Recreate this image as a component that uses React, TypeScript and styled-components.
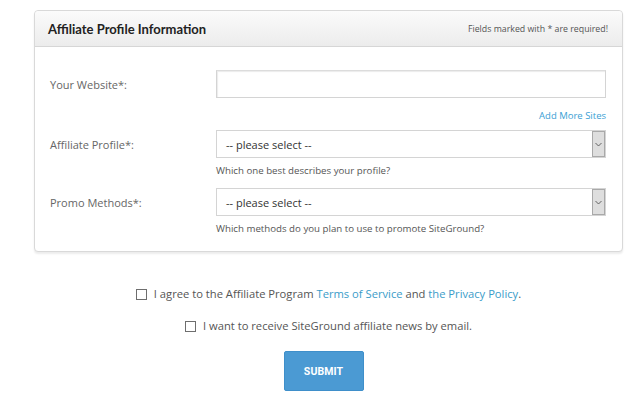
import React from "react";
import styled, { createGlobalStyle } from "styled-components";

const Global = createGlobalStyle`
  html, body { margin: 0; padding: 0; background: #fff; }
  body { font-family: "Open Sans", "Liberation Sans", sans-serif; }
  * { box-sizing: border-box; }
`;

const Page = styled.div`
  width: 589px;
  margin-left: 34px;
  padding-top: 10px;
`;

const Card = styled.section`
  border: 1px solid #d9d9d9;
  border-radius: 4px;
  background: #fff;
  box-shadow: 0 2px 2px rgba(0, 0, 0, 0.08);
`;

const Header = styled.header`
  height: 36px;
  display: flex;
  align-items: center;
  justify-content: space-between;
  padding: 0 14px 0 13px;
  background: linear-gradient(#fbfbfb, #ececec);
  border-bottom: 1px solid #d6d6d6;
  border-radius: 4px 4px 0 0;
`;

const Title = styled.h2`
  margin: 0;
  font-family: Lato, "Liberation Sans", sans-serif;
  font-weight: 700;
  font-size: 13px;
  color: #222;
`;

const Note = styled.span`
  font-size: 8.8px;
  color: #555;
`;

const Body = styled.div`
  display: grid;
  grid-template-columns: 166px 1fr;
  padding: 23px 16px 15px 15px;
`;

const Label = styled.label`
  font-size: 11px;
  color: #666;
  display: flex;
  align-items: center;
  height: 28px;
`;

const Field = styled.div<{ $gap?: number }>`
  display: flex;
  flex-direction: column;
  margin-bottom: ${(p) => p.$gap ?? 0}px;
`;

const TextInput = styled.input`
  height: 28px;
  width: 100%;
  border: 1px solid #d4d4d4;
  border-top-color: #dcdcdc;
  box-shadow: inset 1px 1px 1px #ececec;
  outline: none;
`;

const SelectBox = styled.div`
  height: 28px;
  display: flex;
  align-items: stretch;
  border: 1px solid #d4d4d4;
  background: #fff;
`;

const SelectText = styled.span`
  flex: 1;
  display: flex;
  align-items: center;
  padding-left: 9px;
  font-size: 11px;
  color: #333;
`;

const ArrowBtn = styled.span`
  width: 13px;
  display: flex;
  align-items: center;
  justify-content: center;
  background: #dedede;
  border: 1px solid #a9a9a9;
`;

const Help = styled.span`
  margin-top: 6px;
  font-size: 9.7px;
  line-height: 14px;
  color: #555;
`;

const AddMore = styled.a`
  grid-column: 2;
  justify-self: end;
  margin: 11px 0 7px;
  font-size: 9.5px;
  line-height: 14px;
  color: #3aa0d4;
  text-decoration: none;
`;

const Footer = styled.div`
  display: flex;
  flex-direction: column;
  align-items: center;
  padding-top: 35px;
`;

const CheckRow = styled.label<{ $mt: number }>`
  display: flex;
  align-items: center;
  gap: 7px;
  margin-top: ${(p) => p.$mt}px;
  font-size: 11.2px;
  line-height: 14px;
  color: #555;
`;

const Box = styled.span`
  width: 11px;
  height: 11px;
  border: 1px solid #6e6e6e;
  background: #fff;
`;

const Link = styled.a`
  color: #3a9cc9;
  text-decoration: none;
`;

const Submit = styled.button`
  margin: 18px 10px 0 0;
  width: 80px;
  height: 40px;
  background: #4b9ad3;
  border: 1px solid #3f8fca;
  border-radius: 2px;
  color: #fff;
  font-family: Roboto, "Liberation Sans", sans-serif;
  font-weight: 700;
  font-size: 10.5px;
  letter-spacing: 0.1px;
`;

const Chevron = () => (
  <svg width="7" height="5" viewBox="0 0 7 5">
    <path d="M0.5 1 L3.5 4 L6.5 1" fill="none" stroke="#555" strokeWidth="0.9" />
  </svg>
);

const Select = () => (
  <SelectBox>
    <SelectText>-- please select --</SelectText>
    <ArrowBtn>
      <Chevron />
    </ArrowBtn>
  </SelectBox>
);

export default function App() {
  return (
    <>
      <Global />
      <Page>
        <Card>
          <Header>
            <Title>Affiliate Profile Information</Title>
            <Note>Fields marked with * are required!</Note>
          </Header>
          <Body>
            <Label>Your Website*:</Label>
            <Field>
              <TextInput />
            </Field>
            <AddMore href="#">Add More Sites</AddMore>
            <Label>Affiliate Profile*:</Label>
            <Field $gap={10}>
              <Select />
              <Help>Which one best describes your profile?</Help>
            </Field>
            <Label>Promo Methods*:</Label>
            <Field>
              <Select />
              <Help>Which methods do you plan to use to promote SiteGround?</Help>
            </Field>
          </Body>
        </Card>
        <Footer>
          <CheckRow $mt={0}>
            <Box />
            <span>
              I agree to the Affiliate Program <Link href="#">Terms of Service</Link> and{" "}
              <Link href="#">the Privacy Policy</Link>.
            </span>
          </CheckRow>
          <CheckRow $mt={18}>
            <Box />
            <span>I want to receive SiteGround affiliate news by email.</span>
          </CheckRow>
          <Submit>SUBMIT</Submit>
        </Footer>
      </Page>
    </>
  );
}
